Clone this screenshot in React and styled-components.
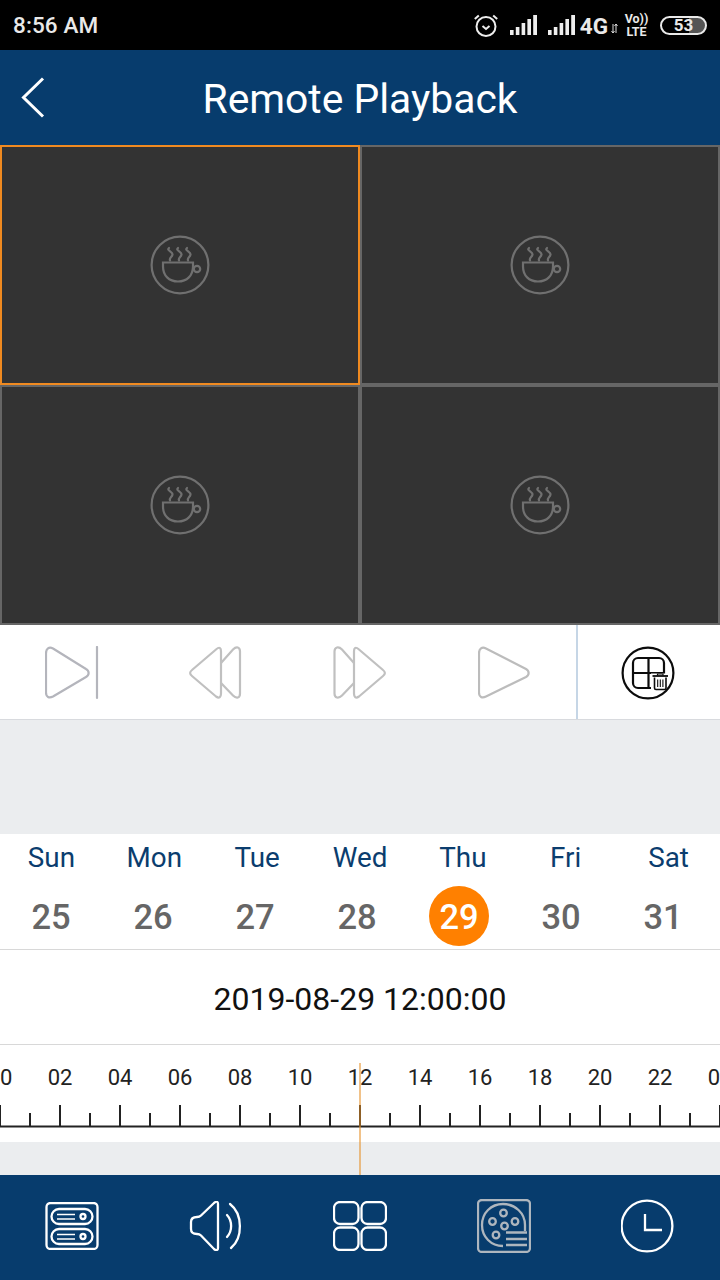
import React from "react";
import styled, { createGlobalStyle } from "styled-components";

const Global = createGlobalStyle`
  html, body { margin: 0; padding: 0; background: #fff; }
  body { font-family: Roboto, "Liberation Sans", sans-serif; }
  * { box-sizing: border-box; }
`;

const Page = styled.div`
  width: 720px;
  height: 1280px;
  display: flex;
  flex-direction: column;
  overflow: hidden;
  background: #fff;
`;

const StatusBar = styled.div`
  height: 50px;
  flex: none;
  background: #000;
  color: #e9e9e9;
  display: flex;
  align-items: center;
  justify-content: space-between;
  padding: 0 13px 0 13px;
`;
const Clock = styled.span`
  font-size: 22.5px;
  font-weight: 500;
  line-height: 1;
  letter-spacing: 0.1px;
`;
const StatusIcons = styled.div`
  display: flex;
  align-items: center;
`;
const AlarmSlot = styled.span`
  display: flex;
  margin-right: 12px;
`;
const SignalSlot = styled.span`
  display: flex;
  margin-right: 11px;
  &:nth-of-type(3) { margin-right: 5px; }
`;
const NetworkLabel = styled.span`
  font-size: 22.5px;
  font-weight: 700;
  line-height: 1;
  padding-top: 2px;
`;
const ArrowsSlot = styled.span`
  display: flex;
  margin: 6px 7px 0 3px;
`;
const Volte = styled.span`
  display: flex;
  flex-direction: column;
  align-items: center;
  width: 23px;
  font-size: 12.5px;
  font-weight: 700;
  line-height: 13px;
  margin-right: 12px;
`;
const Battery = styled.span`
  width: 47px;
  height: 19px;
  border: 2px solid #e9e9e9;
  border-radius: 10px;
  display: flex;
  align-items: center;
  justify-content: center;
  font-size: 17px;
  font-weight: 700;
  line-height: 1;
  color: #e9e9e9;
  background: linear-gradient(to right, #000 63%, #555 63%);
`;

const Header = styled.header`
  height: 95px;
  flex: none;
  background: #073c6d;
  display: flex;
  align-items: center;
  justify-content: center;
  position: relative;
`;
const BackButton = styled.span`
  position: absolute;
  left: 21px;
  top: 27px;
  display: flex;
`;
const Title = styled.h1`
  margin: 0;
  color: #fff;
  font-size: 40.8px;
  font-weight: 400;
  line-height: 1;
  padding-top: 4px;
`;

const VideoGrid = styled.div`
  height: 480px;
  flex: none;
  display: grid;
  grid-template-columns: 1fr 1fr;
  grid-template-rows: 1fr 1fr;
  background: #333;
`;
const VideoCell = styled.div`
  border: 2px solid ${p => (p.$active ? "#f08a20" : "#666")};
  background: #333;
  display: flex;
  align-items: center;
  justify-content: center;
`;

const Controls = styled.div`
  height: 95px;
  flex: none;
  display: flex;
  background: #fff;
  border-bottom: 1px solid #d8dade;
`;
const ControlButton = styled.div`
  width: 144px;
  display: flex;
  align-items: center;
  justify-content: center;
  padding-top: 1px;
`;
const SplitDelete = styled.div`
  flex: 1;
  border-left: 2px solid #c6d6e6;
  display: flex;
  align-items: center;
  justify-content: center;
  padding: 1px 3px 0 0;
`;

const GraySpacer = styled.div`
  background: #ebedef;
  flex: none;
  height: ${p => p.$h}px;
`;

const Calendar = styled.section`
  height: 116px;
  flex: none;
  background: #fff;
  border-bottom: 1px solid #d8d8d8;
  display: flex;
  flex-direction: column;
`;
const WeekRow = styled.div`
  display: grid;
  grid-template-columns: repeat(7, 1fr);
  height: 46px;
  align-items: center;
  text-align: center;
  color: #0b3d6e;
  font-size: 27.8px;
`;
const DayRow = styled.div`
  display: grid;
  grid-template-columns: repeat(7, 102px);
  flex: 1;
  padding-top: 6px;
  align-items: start;
  justify-items: center;
`;
const Day = styled.div`
  width: 60px;
  height: 60px;
  border-radius: 50%;
  display: flex;
  align-items: center;
  justify-content: center;
  padding-top: 3px;
  font-size: 34.5px;
  font-weight: 500;
  line-height: 1;
  color: ${p => (p.$selected ? "#fff" : "#666")};
  background: ${p => (p.$selected ? "#ff8000" : "transparent")};
`;

const DateRow = styled.div`
  height: 95px;
  flex: none;
  border-bottom: 1px solid #d8d8d8;
  display: flex;
  align-items: center;
  justify-content: center;
  padding-top: 4px;
  font-size: 32px;
  color: #111;
`;

const Timeline = styled.section`
  height: 97px;
  flex: none;
  background: #fff;
  overflow: hidden;
  display: flex;
  flex-direction: column;
`;
const HourRow = styled.div`
  display: grid;
  grid-template-columns: repeat(13, 60px);
  margin-left: -30px;
  width: 780px;
  padding-top: 20px;
  font-size: 22px;
  line-height: 26px;
  color: #222;
  text-align: center;
`;
const Ruler = styled.svg`
  display: block;
  margin-top: 14px;
`;
const Marker = styled.div`
  position: absolute;
  left: 359px;
  top: 1063px;
  width: 2px;
  height: 112px;
  background: #e69028;
  opacity: 0.55;
`;

const Footer = styled.nav`
  height: 105px;
  flex: none;
  background: #073c6d;
  display: grid;
  grid-template-columns: repeat(5, 144px);
`;
const FooterItem = styled.div`
  display: flex;
  align-items: center;
  justify-content: center;
  padding-bottom: 3px;
`;

const Cup = () => (
  <svg width="60" height="60" viewBox="0 0 60 60" fill="none" stroke="#707070" strokeWidth="2.2">
    <circle cx="30" cy="30" r="28.4" />
    <path d="M13 27.500h30v4c0 9-6 15-15 15s-15-6-15-15z" />
    <circle cx="47" cy="34" r="3.200" />
    <path d="M19 13c-3 2.500 4 3.500 3.500 6.500S19 22.500 20 25.500M28 13c-3 2.500 4 3.500 3.500 6.500S28 22.500 29 25.500M37 13c-3 2.500 4 3.500 3.500 6.500S37 22.500 38 25.500" strokeLinecap="round" />
  </svg>
);

const Skip = () => (
  <svg width="54" height="54" viewBox="0 0 54 54" fill="none" stroke="#b4b5bc" strokeWidth="2.200" strokeLinejoin="round">
    <path d="M1 7.500C1 2.500 4 .5 8 2.500L41 23c3.500 2 3.500 6 0 8L8 50.500c-4 2-7 .5-7-4z" />
    <path d="M52 1v51" strokeLinecap="round" />
  </svg>
);
const Rewind = () => (
  <svg width="54" height="54" viewBox="0 0 54 54" fill="none" stroke="#c0c0c0" strokeWidth="2.200">
    <path d="M27 3.500c4-3.500 5-1 5 2v42c0 3-1.500 5.500-5 3L3 30c-2.500-2-2.500-4 0-6z" />
    <path d="M32 17L44 3.500c3.500-3.500 7-2.500 7 2v42c0 4.500-3.500 5.500-7 2L32 37" />
  </svg>
);
const Forward = () => (
  <svg width="54" height="54" viewBox="0 0 54 54" fill="none" stroke="#c0c0c0" strokeWidth="2.200">
    <path d="M26 3.500c-4-3.500-5-1-5 2v42c0 3 1.500 5.500 5 3L50 30c2.500-2 2.500-4 0-6z" />
    <path d="M21 17L9 3.500C5.500 0 1.500 1 1.500 5.500v42c0 4.500 4 5.500 7.500 2L21 37" />
  </svg>
);
const Play = () => (
  <svg width="52" height="54" viewBox="0 0 52 54" fill="none" stroke="#bcbcbc" strokeWidth="2.200">
    <path d="M1 7.500C1 2.500 4 .5 8 2.500L48 23c3.500 2 3.500 6 0 8L8 50.500c-4 2-7 .5-7-4z" />
  </svg>
);
const GridTrash = () => (
  <svg width="54" height="54" viewBox="0 0 54 54" fill="none" stroke="#0c0c0c" strokeWidth="2.200">
    <rect x="12" y="12" width="31" height="30" rx="5" />
    <path d="M27.500 12v30M12 27h31" />
    <path d="M30 27.500h20v20H30z" fill="#fff" stroke="none" />
    <circle cx="27" cy="27" r="25.400" />
    <path d="M31.500 30h15.500" strokeWidth="1.800" />
    <path d="M36.500 29.500v-1.500h5.500v1.500" strokeWidth="1.200" />
    <path d="M33.500 31.500v10.500c0 1 .5 1.500 1.500 1.500h8.500c1 0 1.500-.5 1.500-1.500V31.500" strokeWidth="1.600" />
    <path d="M36.700 33.500v7.500M39.300 33.500v7.500M41.900 33.500v7.500" strokeWidth="1.100" />
  </svg>
);

const Server = () => (
  <svg width="54" height="48" viewBox="0 0 54 48" fill="none" stroke="#fff" strokeWidth="2.300">
    <rect x="1.500" y="1" width="51" height="46" rx="4" />
    <rect x="6.500" y="7" width="41" height="15" rx="7.500" />
    <rect x="6.500" y="27" width="41" height="15" rx="7.500" />
    <path d="M12 12.500h18M12 17h18M12 32.500h18M12 37h18" strokeWidth="1.600" />
    <circle cx="38" cy="14.500" r="2.500" />
    <circle cx="38" cy="34.500" r="2.500" />
  </svg>
);
const Speaker = () => (
  <svg width="54" height="50" viewBox="1 0 54 50" fill="none" stroke="#fff" strokeWidth="2.300" strokeLinecap="round">
    <path d="M26 2c3-2.500 4-1 4 1v44c0 2-1.500 3-4 1L13 34.500c-1-1-2-1.500-4-1.500-4 0-6-2-6-5v-7c0-3 2-5 6-5 2 0 3-.5 4-1.500z" />
    <path d="M39 14c5.500 6 5.500 16 0 22" />
    <path d="M42 3c13 10 13 34 1 44" />
  </svg>
);
const Quad = () => (
  <svg width="54" height="50" viewBox="0 0 54 50" fill="none" stroke="#fff" strokeWidth="2.300">
    <rect x="1" y="1" width="24.500" height="22" rx="6" />
    <rect x="28.500" y="1" width="24.500" height="22" rx="6" />
    <rect x="1" y="26.500" width="24.500" height="22.500" rx="6" />
    <rect x="28.500" y="26.500" width="24.500" height="22.500" rx="6" />
  </svg>
);
const Film = () => (
  <svg width="54" height="54" viewBox="0 0 54 54" fill="none" stroke="#aeb6be" strokeWidth="2.300">
    <rect x="1" y="1" width="52" height="52" rx="4" />
    <path d="M26 47C14 47 5 38 5 26S14 5 26 5c12 0 22 9 22 21v6" />
    <circle cx="26.500" cy="14" r="3.300" />
    <circle cx="15.500" cy="22.500" r="3.300" />
    <circle cx="27.500" cy="27" r="3.300" />
    <circle cx="38" cy="22.500" r="3.300" />
    <circle cx="19" cy="36" r="3.300" />
    <path d="M27 34h24v14H27z" stroke="none" fill="#073c6d" />
    <path d="M29 33.500h21M29 40h21M29 46h21" />
  </svg>
);
const ClockIcon = () => (
  <svg width="54" height="54" viewBox="1 0 54 54" fill="none" stroke="#fff" strokeWidth="2.300">
    <circle cx="27" cy="27" r="25.400" />
    <path d="M25 15v16h17" />
  </svg>
);

const Alarm = () => (
  <svg width="24" height="24" viewBox="0 0 24 24" fill="none" stroke="#eee" strokeWidth="2">
    <circle cx="12" cy="13.500" r="9.500" />
    <path d="M8.500 13l3.500 3 3.500-3" />
    <path d="M.8 6l4-3.500M23.200 6l-4-3.500" />
  </svg>
);
const Signal = () => (
  <svg width="27" height="20" viewBox="0 0 27 20" fill="#eee">
    <rect x="0" y="15" width="3.600" height="5" />
    <rect x="5.800" y="12" width="3.600" height="8" />
    <rect x="11.600" y="8" width="3.600" height="12" />
    <rect x="17.400" y="4" width="3.600" height="16" />
    <rect x="23.200" y="0" width="3.800" height="20" />
  </svg>
);
const Arrows = () => (
  <svg width="7" height="11" viewBox="0 0 7 11" fill="none" stroke="#ddd" strokeWidth="1">
    <path d="M2 1v9M.5 8L2 10 3.500 8M5 10V1M3.500 3L5 1l1.500 2" />
  </svg>
);
const Back = () => (
  <svg width="25" height="42" viewBox="0 0 25 42" fill="none" stroke="#fff" strokeWidth="3">
    <path d="M22 1.500L2.500 20.500 22 39.500" />
  </svg>
);

const weekDays = ["Sun", "Mon", "Tue", "Wed", "Thu", "Fri", "Sat"];
const days = [25, 26, 27, 28, 29, 30, 31];
const hours = ["00", "02", "04", "06", "08", "10", "12", "14", "16", "18", "20", "22", "00"];
const ticks = Array.from({ length: 25 }, (_, i) => i);

export default function App() {
  return (
    <Page>
      <Global />
      <StatusBar>
        <Clock>8:56 AM</Clock>
        <StatusIcons>
          <AlarmSlot><Alarm /></AlarmSlot>
          <SignalSlot><Signal /></SignalSlot>
          <SignalSlot><Signal /></SignalSlot>
          <NetworkLabel>4G</NetworkLabel>
          <ArrowsSlot><Arrows /></ArrowsSlot>
          <Volte><span>Vo))</span><span>LTE</span></Volte>
          <Battery>53</Battery>
        </StatusIcons>
      </StatusBar>
      <Header>
        <BackButton><Back /></BackButton>
        <Title>Remote Playback</Title>
      </Header>
      <VideoGrid>
        {[true, false, false, false].map((active, i) => (
          <VideoCell key={i} $active={active}><Cup /></VideoCell>
        ))}
      </VideoGrid>
      <Controls>
        <ControlButton><Skip /></ControlButton>
        <ControlButton><Rewind /></ControlButton>
        <ControlButton><Forward /></ControlButton>
        <ControlButton><Play /></ControlButton>
        <SplitDelete><GridTrash /></SplitDelete>
      </Controls>
      <GraySpacer $h={114} />
      <Calendar>
        <WeekRow>{weekDays.map(d => <span key={d}>{d}</span>)}</WeekRow>
        <DayRow>{days.map(d => <Day key={d} $selected={d === 29}>{d}</Day>)}</DayRow>
      </Calendar>
      <DateRow>2019-08-29 12:00:00</DateRow>
      <Timeline>
        <HourRow>{hours.map((h, i) => <span key={i}>{h}</span>)}</HourRow>
        <Ruler width="720" height="24" viewBox="0 0 720 24">
          <path d="M0 21.500h720" stroke="#222" strokeWidth="2" />
          {ticks.map(i => (
            <path key={i} d={`M${i * 30} ${i % 2 ? 8 : 0}V21`} stroke="#222" strokeWidth="2" />
          ))}
        </Ruler>
      </Timeline>
      <GraySpacer $h={33} />
      <Footer>
        <FooterItem><Server /></FooterItem>
        <FooterItem><Speaker /></FooterItem>
        <FooterItem><Quad /></FooterItem>
        <FooterItem><Film /></FooterItem>
        <FooterItem><ClockIcon /></FooterItem>
      </Footer>
      <Marker />
    </Page>
  );
}
